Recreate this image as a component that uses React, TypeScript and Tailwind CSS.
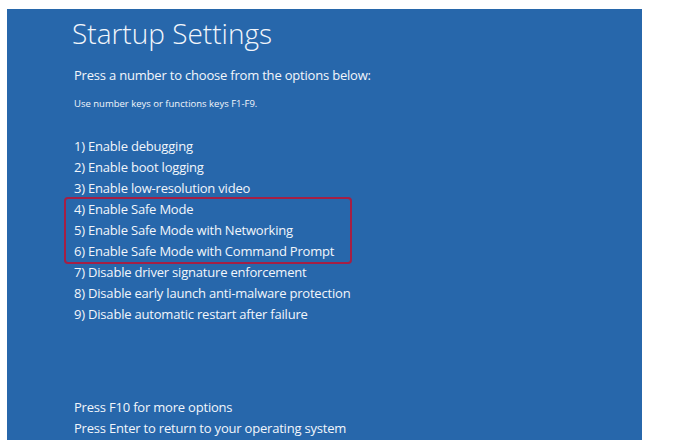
import React from "react";

const items = [
  "1) Enable debugging",
  "2) Enable boot logging",
  "3) Enable low-resolution video",
  "4) Enable Safe Mode",
  "5) Enable Safe Mode with Networking",
  "6) Enable Safe Mode with Command Prompt",
  "7) Disable driver signature enforcement",
  "8) Disable early launch anti-malware protection",
  "9) Disable automatic restart after failure",
];

function Line({ text }: { text: string }) {
  return (
    <div className="h-[21px] text-[13px] tracking-[-0.2px] leading-[21px] whitespace-nowrap">{text}</div>
  );
}

export default function App() {
  return (
    <div className="w-[690px] h-[440px] bg-white pt-[9px] pl-[7px] overflow-hidden">
      <div
        className="w-[635px] h-[431px] bg-[#2767ab] pl-[67px] text-[#f2f6fb] flex flex-col"
        style={{ fontFamily: '"Open Sans", "Noto Sans", sans-serif' }}
      >
        <div className="mt-[8px] h-[32px] text-[28px] leading-[32px] font-light -ml-[2px] whitespace-nowrap">
          Startup Settings
        </div>
        <div className="mt-[15.5px] h-[20px] text-[13px] tracking-[-0.2px] leading-[20px] whitespace-nowrap">
          Press a number to choose from the options below:
        </div>
        <div className="mt-[12.5px] h-[14px] text-[9.5px] leading-[14px] whitespace-nowrap">
          Use number keys or functions keys F1-F9.
        </div>
        <div className="mt-[25px] flex flex-col">
          {items.slice(0, 3).map((t) => (
            <Line key={t} text={t} />
          ))}
          <div className="relative flex flex-col">
            <div className="absolute -left-[10px] top-[-2px] w-[288px] h-[67px] border-2 border-[#a51f45] rounded-[4px]" />
            {items.slice(3, 6).map((t) => (
              <Line key={t} text={t} />
            ))}
          </div>
          {items.slice(6).map((t) => (
            <Line key={t} text={t} />
          ))}
        </div>
        <div className="mt-[72px] flex flex-col">
          <Line text="Press F10 for more options" />
          <Line text="Press Enter to return to your operating system" />
        </div>
      </div>
    </div>
  );
}
